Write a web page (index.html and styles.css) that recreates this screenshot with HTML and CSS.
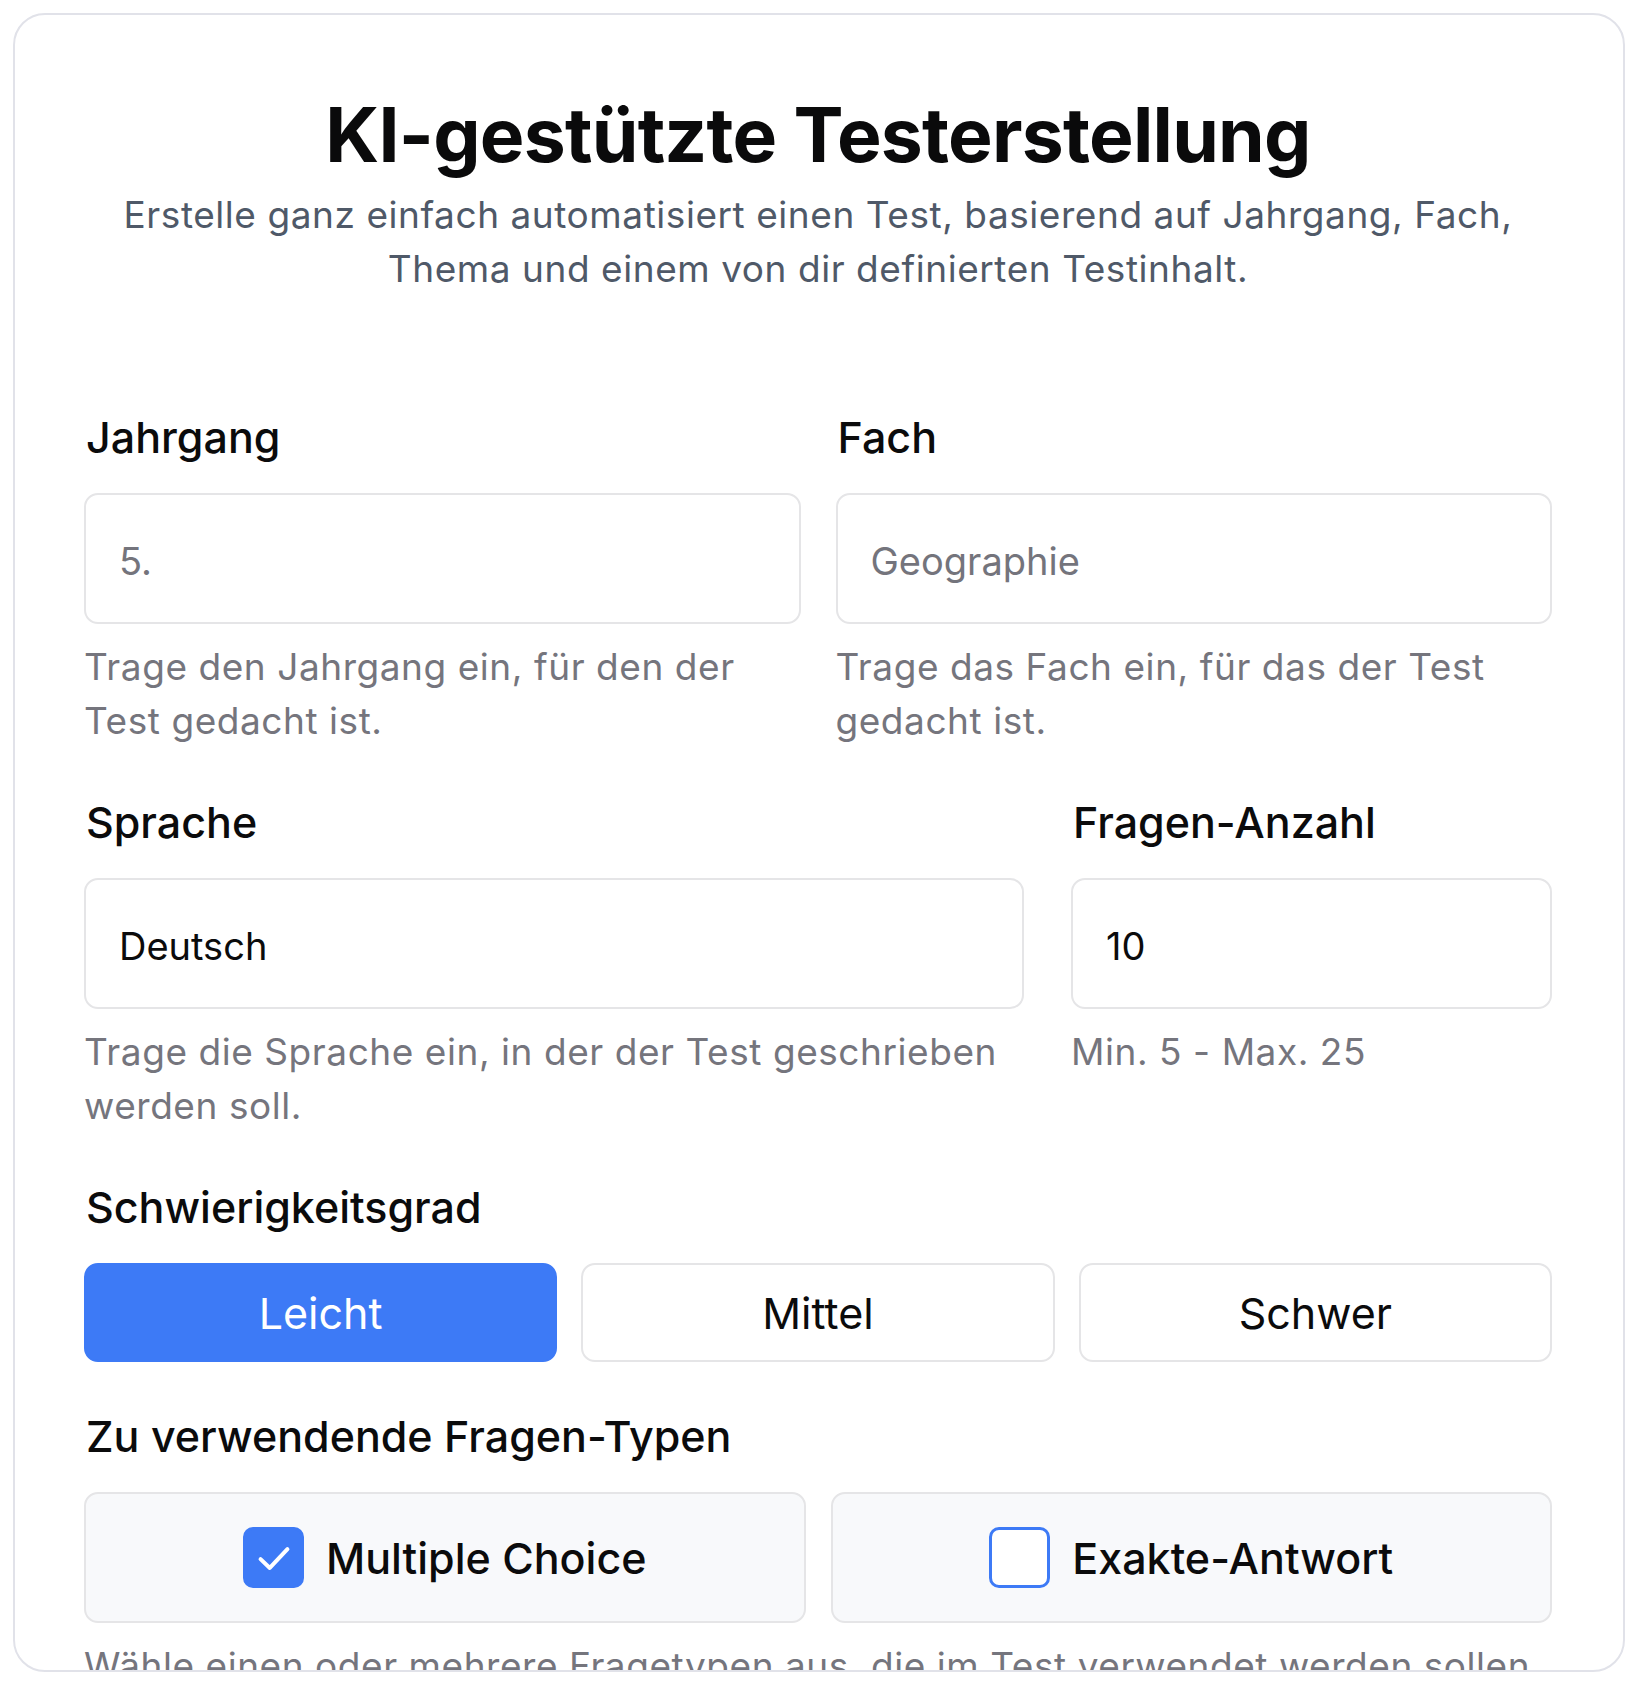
FILE: index.html
```html
<!DOCTYPE html>
<html lang="de">
<head>
<meta charset="utf-8">
<title>KI-gestützte Testerstellung</title>
<link rel="stylesheet" href="styles.css">
</head>
<body>
<div class="card">
  <header class="head">
    <h1 class="title">KI-gestützte Testerstellung</h1>
    <p class="subtitle">Erstelle ganz einfach automatisiert einen Test, basierend auf Jahrgang, Fach, Thema und einem von dir definierten Testinhalt.</p>
  </header>

  <div class="form">
    <div class="row row-half">
      <div class="field">
        <label class="label">Jahrgang</label>
        <input class="input" type="text" placeholder="5.">
        <p class="help">Trage den Jahrgang ein, für den der Test gedacht ist.</p>
      </div>
      <div class="field">
        <label class="label">Fach</label>
        <input class="input" type="text" placeholder="Geographie">
        <p class="help">Trage das Fach ein, für das der Test gedacht ist.</p>
      </div>
    </div>

    <div class="row row-wide">
      <div class="field">
        <label class="label">Sprache</label>
        <input class="input" type="text" value="Deutsch">
        <p class="help">Trage die Sprache ein, in der der Test geschrieben werden soll.</p>
      </div>
      <div class="field">
        <label class="label">Fragen-Anzahl</label>
        <input class="input" type="text" value="10">
        <p class="help">Min. 5 - Max. 25</p>
      </div>
    </div>

    <div class="field">
      <div class="label">Schwierigkeitsgrad</div>
      <div class="levels">
        <button class="level level-active">Leicht</button>
        <button class="level">Mittel</button>
        <button class="level">Schwer</button>
      </div>
    </div>

    <div class="field">
      <div class="label">Zu verwendende Fragen-Typen</div>
      <div class="types">
        <div class="type">
          <span class="box box-checked">
            <svg viewBox="0 0 24 24" width="46" height="46"><polyline points="5 12.6 9.8 17.2 19 7.4" fill="none" stroke="#fff" stroke-width="2.1" stroke-linecap="round" stroke-linejoin="round"/></svg>
          </span>
          <span class="type-text">Multiple Choice</span>
        </div>
        <div class="type">
          <span class="box"></span>
          <span class="type-text">Exakte-Antwort</span>
        </div>
      </div>
      <p class="help help-last">Wähle einen oder mehrere Fragetypen aus, die im Test verwendet werden sollen.</p>
    </div>
  </div>
</div>
</body>
</html>
```

FILE: styles.css
```css
* { box-sizing: border-box; }

html, body {
  margin: 0;
  padding: 0;
  background: #ffffff;
}

body {
  font-family: Inter, "Noto Sans", "Liberation Sans", sans-serif;
  color: #0b0b0c;
}

.card {
  margin: 13px 0 0 13px;
  width: 1612px;
  height: 1659px;
  border: 2px solid #e1e2e9;
  border-radius: 32px;
  padding: 78px 71px 0 69px;
  overflow: hidden;
  background: #fff;
}

.head {
  text-align: center;
  margin-bottom: 111px;
}

.title {
  margin: 0;
  font-size: 75px;
  line-height: 84px;
  font-weight: 700;
  letter-spacing: -0.01em;
  color: #0a0a0b;
}

.subtitle {
  margin: 11px 0 0;
  font-size: 37px;
  line-height: 54px;
  color: #4f5968;
  letter-spacing: 0.015em;
}

.form {
  display: flex;
  flex-direction: column;
  gap: 44px;
}

.row {
  display: grid;
}

.row-half {
  grid-template-columns: 1fr 1fr;
  column-gap: 35px;
}

.row-wide {
  grid-template-columns: 940fr 481fr;
  column-gap: 47px;
}

.field {
  display: flex;
  flex-direction: column;
  min-width: 0;
}

.label {
  display: block;
  font-size: 43px;
  line-height: 60px;
  font-weight: 500;
  color: #0b0b0c;
  margin: 0 0 26px 2px;
}

.input {
  height: 131px;
  width: 100%;
  border: 2px solid #e5e5e7;
  border-radius: 14px;
  padding: 4px 33px 0;
  font-family: inherit;
  font-size: 38px;
  color: #0b0b0c;
  background: #fff;
  outline: none;
}

.input::placeholder {
  color: #74747c;
}

.help {
  margin: 16px 0 0;
  font-size: 37px;
  line-height: 54px;
  color: #75757d;
  letter-spacing: 0.015em;
}

.help-last {
  white-space: nowrap;
}

.levels {
  display: grid;
  grid-template-columns: 1fr 1fr 1fr;
  gap: 24px;
}

.level {
  height: 99px;
  border: 2px solid #e5e5e7;
  border-radius: 14px;
  background: #fff;
  font-family: inherit;
  font-size: 43px;
  color: #0b0b0c;
  padding: 0;
}

.level-active {
  background: #3d7af6;
  border-color: #3d7af6;
  color: #fff;
}

.types {
  display: grid;
  grid-template-columns: 1fr 1fr;
  gap: 25px;
}

.type {
  height: 131px;
  border: 2px solid #e5e5e7;
  border-radius: 14px;
  background: #f8f9fb;
  display: flex;
  align-items: center;
  justify-content: center;
  gap: 22px;
}

.box {
  width: 61px;
  height: 61px;
  border-radius: 10px;
  border: 3px solid #3d7af6;
  background: #fff;
  display: flex;
  align-items: center;
  justify-content: center;
}

.box-checked {
  background: #3d7af6;
}

.type-text {
  font-size: 43px;
  line-height: 60px;
  font-weight: 500;
  color: #0b0b0c;
}
```
